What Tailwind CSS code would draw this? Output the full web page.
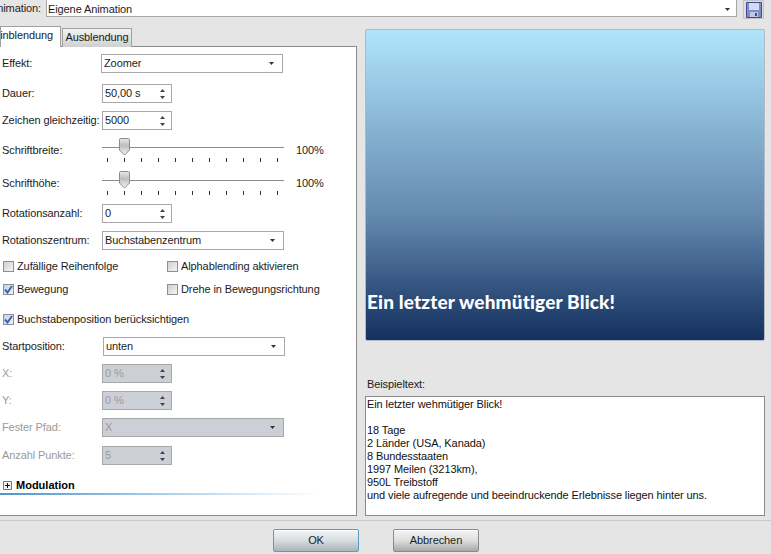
<!DOCTYPE html>
<html lang="de">
<head>
<meta charset="UTF-8">
<title>Eigene Animation</title>
<script src="https://cdn.jsdelivr.net/npm/@tailwindcss/browser@4"></script>
</head>
<body class="bg-[#e5e5e5] overflow-hidden">
<div class="w-[771px] h-[554px] overflow-hidden flex flex-col font-['Liberation_Sans','DejaVu_Sans',sans-serif] text-[11px] leading-[13px] tracking-[-0.1px] text-[#1c1c1c]">

  <!-- Top row -->
  <div class="h-[18px] flex items-start shrink-0">
    <div class="w-[41px] h-[17px] overflow-hidden flex justify-end items-center whitespace-nowrap">Animation:</div>
    <div class="ml-[5px] w-[691px] h-[18px] -mt-px bg-white border border-[#a8a8a8] flex items-center justify-between pl-px pr-[6px] pt-[2px]">
      <span>Eigene Animation</span>
      <svg width="5" height="3" viewBox="0 0 5 3"><path d="M0 0h5L2.500 3z" fill="#333"/></svg>
    </div>
    <div class="ml-[6px] w-[21px] h-[19px] bg-[#dedede] border border-[#c4c4c4] flex items-center justify-center">
      <svg width="16" height="16" viewBox="0 0 16 16"><path d="M.5.500h15v15H.5z" fill="#7f8ec6" stroke="#3d4a92"/><path d="M3 1h10v7H3z" fill="#d3dbf2"/><path d="M4 10h8v5H4z" fill="#bfc8e6"/><path d="M9 11h2v3H9z" fill="#3d4a92"/></svg>
    </div>
  </div>

  <!-- Main -->
  <div class="flex h-[498px] shrink-0">
    <!-- Left column -->
    <div class="w-[357px] shrink-0 flex flex-col pt-[8px]">
      <div class="flex h-[21px] items-end relative z-10">
        <div class="w-[61px] h-[21px] bg-white border border-b-0 border-r border-[#a0a0a0] overflow-hidden flex justify-end items-center pr-[7px] pb-[3px] whitespace-nowrap">Einblendung</div>
        <div class="ml-px w-[70px] h-[19px] bg-gradient-to-b from-[#f2f2f2] to-[#d0d0d0] border border-b-0 border-[#a0a0a0] flex items-center justify-center pb-px whitespace-nowrap">Ausblendung</div>
      </div>
      <div class="-mt-px h-[470px] w-[357px] bg-white border border-l-0 border-[#8a8a8a] flex flex-col pl-[2px]">

        <!-- rows -->
        <div class="flex items-center h-[19px] mt-[7px]">
          <span class="w-[99px]">Effekt:</span>
          <div class="w-[182px] h-[19px] border border-[#a8a8a8] bg-white flex items-center justify-between pl-[2px] pr-[8px]"><span>Zoomer</span><svg width="5" height="3" viewBox="0 0 5 3"><path d="M0 0h5L2.500 3z" fill="#333"/></svg></div>
        </div>

        <div class="flex items-center h-[19px] mt-[11px]">
          <span class="w-[100px]">Dauer:</span>
          <div class="w-[70px] h-[19px] border border-[#a8a8a8] bg-white flex items-center justify-between pl-[2px] pr-[5px]"><span>50,00 s</span><svg width="7" height="12" viewBox="0 0 7 12"><path d="M3.500 1L6 4H1zM3.500 11L1 8h5z" fill="#444"/></svg></div>
        </div>

        <div class="flex items-center h-[19px] mt-[8px]">
          <span class="w-[100px] whitespace-nowrap">Zeichen gleichzeitig:</span>
          <div class="w-[70px] h-[19px] border border-[#a8a8a8] bg-white flex items-center justify-between pl-[2px] pr-[5px]"><span>5000</span><svg width="7" height="12" viewBox="0 0 7 12"><path d="M3.500 1L6 4H1zM3.500 11L1 8h5z" fill="#444"/></svg></div>
        </div>

        <!-- Schriftbreite -->
        <div class="flex h-[25px] mt-[8px]">
          <span class="w-[100px] pt-[6px]">Schriftbreite:</span>
          <div class="w-[182px] relative">
            <div class="h-px bg-[#8c8c8c] mt-[9px]"></div>
            <svg class="absolute left-[16px] top-0" width="13" height="18" viewBox="0 0 13 18"><defs><linearGradient id="t1" x1="0" y1="0" x2="0" y2="1"><stop offset="0" stop-color="#e8e8e8"/><stop offset=".45" stop-color="#bdbdbd"/><stop offset="1" stop-color="#f6f6f6"/></linearGradient></defs><path d="M1.500 1.500q0-1 1-1h8q1 0 1 1V12l-5 5-5-5z" fill="url(#t1)" stroke="#8b8b8b"/></svg>
            <div class="flex justify-between pl-[5px] pr-[6px] mt-[10px]">
              <i class="w-px h-[4px] bg-[#333]"></i><i class="w-px h-[4px] bg-[#333]"></i><i class="w-px h-[4px] bg-[#333]"></i><i class="w-px h-[4px] bg-[#333]"></i><i class="w-px h-[4px] bg-[#333]"></i><i class="w-px h-[4px] bg-[#333]"></i><i class="w-px h-[4px] bg-[#333]"></i><i class="w-px h-[4px] bg-[#333]"></i><i class="w-px h-[4px] bg-[#333]"></i><i class="w-px h-[4px] bg-[#333]"></i><i class="w-px h-[4px] bg-[#333]"></i>
            </div>
          </div>
          <span class="ml-[12px] pt-[6px]">100%</span>
        </div>

        <!-- Schrifthöhe -->
        <div class="flex h-[25px] mt-[8px]">
          <span class="w-[100px] pt-[6px]">Schrifthöhe:</span>
          <div class="w-[182px] relative">
            <div class="h-px bg-[#8c8c8c] mt-[9px]"></div>
            <svg class="absolute left-[16px] top-0" width="13" height="18" viewBox="0 0 13 18"><path d="M1.500 1.500q0-1 1-1h8q1 0 1 1V12l-5 5-5-5z" fill="url(#t1)" stroke="#8b8b8b"/></svg>
            <div class="flex justify-between pl-[5px] pr-[6px] mt-[10px]">
              <i class="w-px h-[4px] bg-[#333]"></i><i class="w-px h-[4px] bg-[#333]"></i><i class="w-px h-[4px] bg-[#333]"></i><i class="w-px h-[4px] bg-[#333]"></i><i class="w-px h-[4px] bg-[#333]"></i><i class="w-px h-[4px] bg-[#333]"></i><i class="w-px h-[4px] bg-[#333]"></i><i class="w-px h-[4px] bg-[#333]"></i><i class="w-px h-[4px] bg-[#333]"></i><i class="w-px h-[4px] bg-[#333]"></i><i class="w-px h-[4px] bg-[#333]"></i>
            </div>
          </div>
          <span class="ml-[12px] pt-[6px]">100%</span>
        </div>

        <div class="flex items-center h-[19px] mt-[8px]">
          <span class="w-[100px]">Rotationsanzahl:</span>
          <div class="w-[70px] h-[19px] border border-[#a8a8a8] bg-white flex items-center justify-between pl-[2px] pr-[5px]"><span>0</span><svg width="7" height="12" viewBox="0 0 7 12"><path d="M3.500 1L6 4H1zM3.500 11L1 8h5z" fill="#444"/></svg></div>
        </div>

        <div class="flex items-center h-[19px] mt-[8px]">
          <span class="w-[100px]">Rotationszentrum:</span>
          <div class="w-[182px] h-[19px] border border-[#a8a8a8] bg-white flex items-center justify-between pl-[2px] pr-[8px]"><span>Buchstabenzentrum</span><svg width="5" height="3" viewBox="0 0 5 3"><path d="M0 0h5L2.500 3z" fill="#333"/></svg></div>
        </div>

        <!-- Checkboxes -->
        <div class="flex items-center h-[13px] mt-[10px]">
          <div class="w-[164px] flex items-center gap-[3px] pl-px">
            <span class="w-[11px] h-[11px] border border-[#8f8f8f] bg-gradient-to-br from-[#cfcfcf] to-[#f6f6f6]"></span><span>Zufällige Reihenfolge</span>
          </div>
          <div class="flex items-center gap-[3px] pl-px">
            <span class="w-[11px] h-[11px] border border-[#8f8f8f] bg-gradient-to-br from-[#cfcfcf] to-[#f6f6f6]"></span><span>Alphablending aktivieren</span>
          </div>
        </div>
        <div class="flex items-center h-[13px] mt-[10px]">
          <div class="w-[164px] flex items-center gap-[3px] pl-px">
            <span class="w-[11px] h-[11px] border border-[#8f8f8f] bg-gradient-to-br from-[#c5d3e6] to-[#eef2f8] flex items-center justify-center"><svg width="9" height="9" viewBox="0 0 9 9"><path d="M1 4.500l2.500 3L8 1" fill="none" stroke="#3a66ad" stroke-width="2"/></svg></span><span>Bewegung</span>
          </div>
          <div class="flex items-center gap-[3px] pl-px">
            <span class="w-[11px] h-[11px] border border-[#8f8f8f] bg-gradient-to-br from-[#cfcfcf] to-[#f6f6f6]"></span><span>Drehe in Bewegungsrichtung</span>
          </div>
        </div>
        <div class="flex items-center h-[13px] mt-[17px]">
          <div class="flex items-center gap-[3px] pl-px">
            <span class="w-[11px] h-[11px] border border-[#8f8f8f] bg-gradient-to-br from-[#c5d3e6] to-[#eef2f8] flex items-center justify-center"><svg width="9" height="9" viewBox="0 0 9 9"><path d="M1 4.500l2.500 3L8 1" fill="none" stroke="#3a66ad" stroke-width="2"/></svg></span><span>Buchstabenposition berücksichtigen</span>
          </div>
        </div>

        <div class="flex items-center h-[19px] mt-[11px]">
          <span class="w-[101px]">Startposition:</span>
          <div class="w-[182px] h-[19px] border border-[#a8a8a8] bg-white flex items-center justify-between pl-[2px] pr-[8px]"><span>unten</span><svg width="5" height="3" viewBox="0 0 5 3"><path d="M0 0h5L2.500 3z" fill="#333"/></svg></div>
        </div>

        <!-- Disabled rows -->
        <div class="flex items-center h-[19px] mt-[8px] text-[#9a9a9a]">
          <span class="w-[100px]">X:</span>
          <div class="w-[70px] h-[19px] border border-[#a8a8a8] bg-[#ccd0d6] flex items-center justify-between pl-[2px] pr-[5px]"><span>0 %</span><svg width="7" height="12" viewBox="0 0 7 12"><path d="M3.500 1L6 4H1zM3.500 11L1 8h5z" fill="#444"/></svg></div>
        </div>
        <div class="flex items-center h-[19px] mt-[8px] text-[#9a9a9a]">
          <span class="w-[100px]">Y:</span>
          <div class="w-[70px] h-[19px] border border-[#a8a8a8] bg-[#ccd0d6] flex items-center justify-between pl-[2px] pr-[5px]"><span>0 %</span><svg width="7" height="12" viewBox="0 0 7 12"><path d="M3.500 1L6 4H1zM3.500 11L1 8h5z" fill="#444"/></svg></div>
        </div>
        <div class="flex items-center h-[19px] mt-[8px] text-[#9a9a9a]">
          <span class="w-[100px]">Fester Pfad:</span>
          <div class="w-[182px] h-[19px] border border-[#a8a8a8] bg-[#ccd0d6] flex items-center justify-between pl-[2px] pr-[8px]"><span>X</span><svg width="5" height="3" viewBox="0 0 5 3"><path d="M0 0h5L2.500 3z" fill="#333"/></svg></div>
        </div>
        <div class="flex items-center h-[19px] mt-[9px] text-[#9a9a9a]">
          <span class="w-[100px]">Anzahl Punkte:</span>
          <div class="w-[70px] h-[19px] border border-[#a8a8a8] bg-[#ccd0d6] flex items-center justify-between pl-[2px] pr-[5px]"><span>5</span><svg width="7" height="12" viewBox="0 0 7 12"><path d="M3.500 1L6 4H1zM3.500 11L1 8h5z" fill="#444"/></svg></div>
        </div>

        <!-- Modulation -->
        <div class="flex items-center h-[13px] mt-[14px] pl-px gap-[4px]">
          <svg width="9" height="9" viewBox="0 0 9 9"><path d="M.5.500h8v8h-8z" fill="#f2f2f2" stroke="#777"/><path d="M2 4.500h5M4.500 2v5" stroke="#111"/></svg>
          <span class="font-bold text-[#000] tracking-normal">Modulation</span>
        </div>
        <div class="h-[2px] w-[320px] -ml-[2px] mt-px bg-gradient-to-r from-[#4f93cf] via-[#a6cdea] to-white"></div>
      </div>
    </div>

    <!-- Right column -->
    <div class="ml-[8px] w-[400px] flex flex-col pt-[11px]">
      <div class="h-[312px] rounded-[2px] border border-[#b4b8c4] bg-gradient-to-b from-[#b1e5fc] via-[#6489ae] via-60% to-[#14305f] flex flex-col justify-end pb-[27px]">
        <span class="font-['Lato',sans-serif] font-black text-[19px] leading-[22px] tracking-[0.15px] text-white pl-px">Ein letzter wehmütiger Blick!</span>
      </div>
      <div class="mt-[37px] pl-[2px] h-[13px]">Beispieltext:</div>
      <div class="mt-[5px] h-[120px] bg-white border border-[#8a8a8a] pl-px pt-px text-[#111]">
        Ein letzter wehmütiger Blick!<br><br>18 Tage<br>2 Länder (USA, Kanada)<br>8 Bundesstaaten<br>1997 Meilen (3213km),<br>950L Treibstoff<br>und viele aufregende und beeindruckende Erlebnisse liegen hinter uns.
      </div>
    </div>
  </div>

  <!-- Bottom -->
  <div class="flex-1 border-t border-[#c8c8c8] mt-[4px] pt-[8px] pl-[273px] flex gap-[34px] items-start">
    <button class="w-[86px] h-[23px] rounded-[2px] border border-[#5a9cc0] bg-gradient-to-b from-[#eef6fa] via-[#d9dde0] to-[#a9b4ba] shadow-[inset_0_1px_0_#fff]">OK</button>
    <button class="w-[86px] h-[23px] rounded-[2px] border border-[#8a8a8a] bg-gradient-to-b from-[#f4f4f4] via-[#dedede] to-[#a8a8a8] shadow-[inset_0_1px_0_#fff]">Abbrechen</button>
  </div>
</div>
</body>
</html>
